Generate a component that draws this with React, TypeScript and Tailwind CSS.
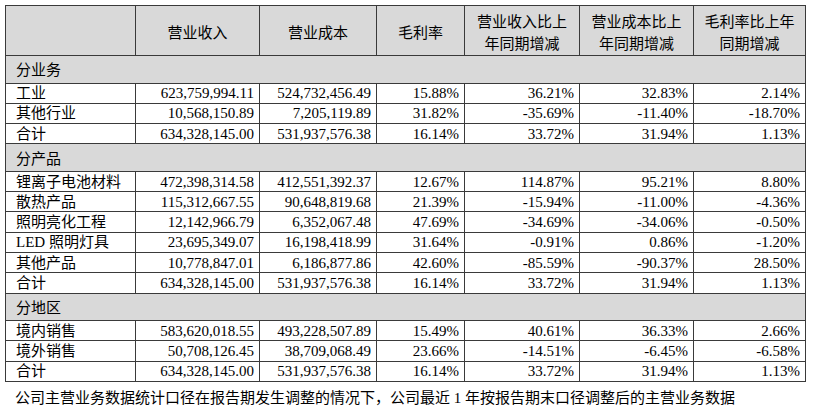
import React from "react";

type Row = { label: string; vals: string[] } | { section: string };

const rows: Row[] = [
  { section: "分业务" },
  { label: "工业", vals: ["623,759,994.11", "524,732,456.49", "15.88%", "36.21%", "32.83%", "2.14%"] },
  { label: "其他行业", vals: ["10,568,150.89", "7,205,119.89", "31.82%", "-35.69%", "-11.40%", "-18.70%"] },
  { label: "合计", vals: ["634,328,145.00", "531,937,576.38", "16.14%", "33.72%", "31.94%", "1.13%"] },
  { section: "分产品" },
  { label: "锂离子电池材料", vals: ["472,398,314.58", "412,551,392.37", "12.67%", "114.87%", "95.21%", "8.80%"] },
  { label: "散热产品", vals: ["115,312,667.55", "90,648,819.68", "21.39%", "-15.94%", "-11.00%", "-4.36%"] },
  { label: "照明亮化工程", vals: ["12,142,966.79", "6,352,067.48", "47.69%", "-34.69%", "-34.06%", "-0.50%"] },
  { label: "LED 照明灯具", vals: ["23,695,349.07", "16,198,418.99", "31.64%", "-0.91%", "0.86%", "-1.20%"] },
  { label: "其他产品", vals: ["10,778,847.01", "6,186,877.86", "42.60%", "-85.59%", "-90.37%", "28.50%"] },
  { label: "合计", vals: ["634,328,145.00", "531,937,576.38", "16.14%", "33.72%", "31.94%", "1.13%"] },
  { section: "分地区" },
  { label: "境内销售", vals: ["583,620,018.55", "493,228,507.89", "15.49%", "40.61%", "36.33%", "2.66%"] },
  { label: "境外销售", vals: ["50,708,126.45", "38,709,068.49", "23.66%", "-14.51%", "-6.45%", "-6.58%"] },
  { label: "合计", vals: ["634,328,145.00", "531,937,576.38", "16.14%", "33.72%", "31.94%", "1.13%"] },
];

const App: React.FC = () => {
  const cell = "border border-[#3a3a3a]";
  return (
    <div
      className="w-[815px] h-[410px] bg-white text-black pl-[5px] pt-[5px]"
      style={{ fontFamily: '"Liberation Serif", "Noto Sans CJK SC", serif' }}
    >
      <table className="table-fixed border-collapse w-[800px] text-[15px] leading-[18px]">
        <colgroup>
          <col className="w-[130px]" />
          <col className="w-[124px]" />
          <col className="w-[117px]" />
          <col className="w-[88px]" />
          <col className="w-[115px]" />
          <col className="w-[114px]" />
          <col className="w-[112px]" />
        </colgroup>
        <thead>
          <tr className="h-[47px] bg-[#d9d9d9] text-center">
            <th className={`${cell} font-normal`}></th>
            <th className={`${cell} font-normal pt-[5px]`}>营业收入</th>
            <th className={`${cell} font-normal pt-[5px]`}>营业成本</th>
            <th className={`${cell} font-normal pt-[5px]`}>毛利率</th>
            <th className={`${cell} font-normal pt-[5px] leading-[22px]`}>
              营业收入比上
              <br />
              年同期增减
            </th>
            <th className={`${cell} font-normal pt-[5px] leading-[22px]`}>
              营业成本比上
              <br />
              年同期增减
            </th>
            <th className={`${cell} font-normal pt-[5px] leading-[22px]`}>
              毛利率比上年
              <br />
              同期增减
            </th>
          </tr>
        </thead>
        <tbody>
          {rows.map((r, i) =>
            "section" in r ? (
              <tr key={i} className="h-[27.5px] bg-[#d9d9d9]">
                <td colSpan={7} className={`${cell} pl-[10px] pt-[2px]`}>
                  {r.section}
                </td>
              </tr>
            ) : (
              <tr key={i} className="h-[20.3px]">
                <td className={`${cell} pl-[10px] p-0 whitespace-nowrap`}>{r.label}</td>
                {r.vals.map((v, j) => (
                  <td key={j} className={`${cell} text-right pr-[5px] p-0 whitespace-nowrap`}>
                    {v}
                  </td>
                ))}
              </tr>
            )
          )}
        </tbody>
      </table>
      <p className="mt-[6px] pl-[10px] text-[15px] leading-[20px]">
        公司主营业务数据统计口径在报告期发生调整的情况下，公司最近 1 年按报告期末口径调整后的主营业务数据
      </p>
    </div>
  );
};

export default App;
